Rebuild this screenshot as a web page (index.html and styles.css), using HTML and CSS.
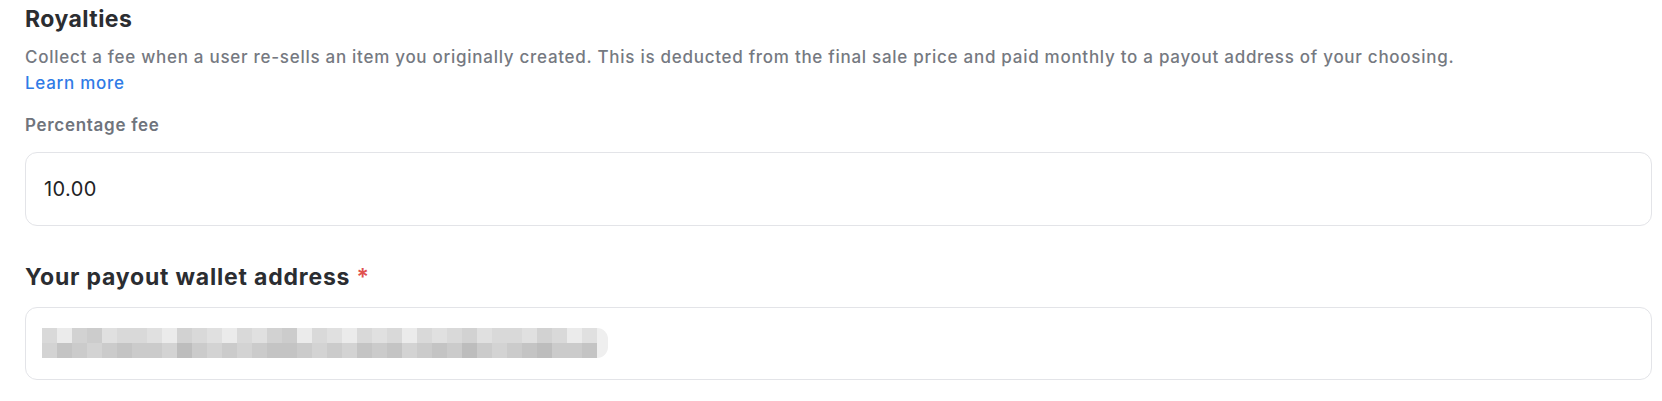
FILE: index.html
```html
<!DOCTYPE html>
<html lang="en">
<head>
<meta charset="utf-8">
<title>Royalties</title>
<link rel="stylesheet" href="styles.css">
</head>
<body>
<main class="page">
  <h2 class="section-title">Royalties</h2>
  <p class="section-desc">Collect a fee when a user re-sells an item you originally created. This is deducted from the final sale price and paid monthly to a payout address of your choosing.<br><a class="learn-more" href="#">Learn more</a></p>

  <label class="field-label">Percentage fee</label>
  <div class="input-box">
    <span class="input-value">10.00</span>
  </div>

  <label class="field-title">Your payout wallet address <span class="req">*</span></label>
  <div class="input-box input-box--wallet">
    <div class="mosaic">
      <div class="mosaic-row">
        <span class="b3"></span><span class="b1"></span><span class="b4"></span><span class="b5"></span><span class="b2"></span><span class="b3"></span><span class="b3"></span><span class="b2"></span><span class="b1"></span><span class="b4"></span><span class="b3"></span><span class="b2"></span><span class="b1"></span><span class="b3"></span><span class="b2"></span><span class="b4"></span><span class="b5"></span><span class="b1"></span><span class="b3"></span><span class="b2"></span><span class="b1"></span><span class="b3"></span><span class="b2"></span><span class="b3"></span><span class="b1"></span><span class="b3"></span><span class="b2"></span><span class="b3"></span><span class="b4"></span><span class="b2"></span><span class="b3"></span><span class="b3"></span><span class="b2"></span><span class="b4"></span><span class="b3"></span><span class="b1"></span><span class="b2"></span>
      </div>
      <div class="mosaic-row">
        <span class="d2"></span><span class="d4"></span><span class="d3"></span><span class="d2"></span><span class="d3"></span><span class="d4"></span><span class="d3"></span><span class="d3"></span><span class="d2"></span><span class="d5"></span><span class="d3"></span><span class="d2"></span><span class="d3"></span><span class="d2"></span><span class="d3"></span><span class="d4"></span><span class="d4"></span><span class="d3"></span><span class="d2"></span><span class="d3"></span><span class="d2"></span><span class="d4"></span><span class="d3"></span><span class="d4"></span><span class="d2"></span><span class="d3"></span><span class="d4"></span><span class="d3"></span><span class="d5"></span><span class="d3"></span><span class="d2"></span><span class="d3"></span><span class="d4"></span><span class="d5"></span><span class="d3"></span><span class="d3"></span><span class="d4"></span>
      </div>
      <span class="mosaic-cap"></span>
    </div>
  </div>
</main>
</body>
</html>
```

FILE: styles.css
```css
html, body {
  margin: 0;
  padding: 0;
  background: #ffffff;
}

body {
  font-family: Inter, "Noto Sans", "Liberation Sans", sans-serif;
  color: #2b2d31;
}

.page {
  padding: 5px 10px 0 25px;
  display: flex;
  flex-direction: column;
}

.section-title {
  margin: 0;
  font-size: 23px;
  line-height: 28px;
  font-weight: 700;
  letter-spacing: 0.45px;
  color: #2b2d31;
}

.section-desc {
  margin: 11px 0 0;
  font-size: 17px;
  line-height: 26px;
  font-weight: 500;
  color: #757981;
  letter-spacing: 0.72px;
}

.learn-more {
  color: #2f7be6;
  text-decoration: none;
  font-weight: 500;
}

.field-label {
  margin-top: 17px;
  font-size: 17px;
  line-height: 24px;
  font-weight: 600;
  color: #6f747c;
  letter-spacing: 0.7px;
}

.input-box {
  margin-top: 15px;
  height: 74px;
  box-sizing: border-box;
  border: 1.5px solid #e3e4e8;
  border-radius: 12px;
  background: #ffffff;
  display: flex;
  align-items: center;
  padding-left: 18px;
}

.input-value {
  font-size: 20px;
  color: #222326;
  letter-spacing: 0.4px;
}

.field-title {
  margin-top: 37px;
  font-size: 23px;
  line-height: 28px;
  font-weight: 700;
  letter-spacing: 0.8px;
  color: #2b2d31;
}

.req {
  color: #e0514f;
  font-weight: 600;
}

.input-box--wallet {
  margin-top: 16px;
  height: 73px;
  padding-left: 16px;
}

.mosaic {
  position: relative;
  display: flex;
  flex-direction: column;
  margin-top: -2px;
}

.mosaic-row {
  display: flex;
}

.mosaic-row span {
  width: 15px;
  height: 15px;
  flex: none;
}

.mosaic-cap {
  position: absolute;
  left: 100%;
  top: 0;
  width: 11px;
  height: 30px;
  border-radius: 0 15px 15px 0;
  background: #efefef;
}

.b1 { background: #ebebeb; }
.b2 { background: #e0e0e0; }
.b3 { background: #d9d9d9; }
.b4 { background: #d2d2d2; }
.b5 { background: #cccccc; }

.d2 { background: #d3d3d3; }
.d3 { background: #cbcbcb; }
.d4 { background: #c4c4c4; }
.d5 { background: #bdbdbd; }
```
